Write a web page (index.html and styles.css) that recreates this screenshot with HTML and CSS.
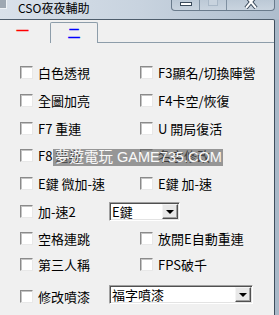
FILE: index.html
```html
<!DOCTYPE html>
<html>
<head>
    <meta charset="UTF-8">
    <meta name="viewport" content="width=device-width, initial-scale=1.0">
    <title>CSO夜夜輔助</title>
    <link rel="stylesheet" href="styles.css">
</head>
<body>
    <div class="window">
        <div class="titlebar">
            <span class="appIcon"></span>
            <span class="title">CSO夜夜輔助</span>
            <div class="captionBtns">
                <span class="cap capMin"><i></i></span>
                <span class="cap capMax"><i></i></span>
                <span class="cap capClose">
                    <svg width="14" height="9" viewBox="0 0 14 9">
                        <path d="M2,-4 L12,8 M12,-4 L2,8" stroke="#3a4a5a" stroke-width="4" fill="none"/>
                        <path d="M2,-4 L12,8 M12,-4 L2,8" stroke="#ffffff" stroke-width="2" fill="none"/>
                    </svg>
                </span>
            </div>
        </div>

        <div class="client">
            <div class="tabs">
                <span class="tab tabActive">一</span>
                <span class="tab tabOther">二</span>
                <span class="tabRest"></span>
            </div>

            <div class="options">
                <label class="opt"><span class="box"></span>白色透視</label>
                <label class="opt"><span class="box"></span>F3顯名/切換陣營</label>

                <label class="opt"><span class="box"></span>全圖加亮</label>
                <label class="opt"><span class="box"></span>F4卡空/恢復</label>

                <label class="opt"><span class="box"></span>F7 重連</label>
                <label class="opt"><span class="box"></span>U 開局復活</label>

                <label class="opt"><span class="box"></span>F8 遁身</label>
                <label class="opt"><span class="box"></span>名字修改</label>

                <label class="opt"><span class="box"></span>E鍵 微加-速</label>
                <label class="opt"><span class="box"></span>E鍵 加-速</label>

                <div class="opt wide">
                    <span class="box"></span>
                    <span class="optLabel">加-速2</span>
                    <div class="combo comboKey">
                        <span class="comboText">E鍵</span>
                        <span class="comboBtn"><i></i></span>
                    </div>
                </div>

                <label class="opt"><span class="box"></span>空格連跳</label>
                <label class="opt"><span class="box"></span>放開E自動重連</label>

                <label class="opt"><span class="box"></span>第三人稱</label>
                <label class="opt"><span class="box"></span>FPS破千</label>

                <div class="opt wide">
                    <span class="box"></span>
                    <span class="optLabel">修改噴漆</span>
                    <div class="combo comboSpray">
                        <span class="comboText">福字噴漆</span>
                        <span class="comboBtn"><i></i></span>
                    </div>
                </div>
            </div>
        </div>

        <div class="watermark">夢遊電玩 GAME735.COM</div>
    </div>
</body>
</html>
```

FILE: styles.css
```css
body {
    margin: 0;
    font-family: "Noto Sans CJK TC", sans-serif;
}

.window {
    position: relative;
    width: 279px;
    height: 315px;
    overflow: hidden;
    background-color: #a9b8c8;
    display: flex;
    flex-direction: column;
}

/* title bar */
.titlebar {
    height: 19px;
    flex: none;
    display: flex;
    align-items: flex-start;
    background: linear-gradient(to right, #d9e1ea, #c8d3df 50%, #aebdcd);
}

.appIcon {
    width: 6px;
    height: 8px;
    background-color: #9ea8b2;
    border-right: 1px solid #eef2f5;
    border-bottom: 1px solid #eef2f5;
}

.title {
    margin-left: 11px;
    font-size: 12px;
    line-height: 16px;
    color: #000;
}

.captionBtns {
    margin-left: auto;
    margin-right: 4px;
    display: flex;
    height: 11px;
    border: 1px solid #6a7b8c;
    border-top: none;
    border-radius: 0 0 4px 4px;
    box-sizing: border-box;
    overflow: hidden;
    background: linear-gradient(#bcc9d6, #c9d4df);
}

.cap {
    display: flex;
    justify-content: center;
    align-items: flex-start;
    height: 100%;
}

.capMin {
    width: 27px;
    border-right: 1px solid #7f90a1;
}

.capMin i {
    margin-top: 2px;
    width: 10px;
    height: 2px;
    border: 1px solid #3a4a5a;
    background-color: #fff;
}

.capMax {
    width: 26px;
    border-right: 1px solid #7f90a1;
}

.capMax i {
    width: 8px;
    height: 5px;
    border: 1px solid #a9b8c7;
    border-top: none;
    background-color: #c8d3de;
}

.capClose {
    width: 47px;
}

/* client area */
.client {
    flex: 1;
    margin-right: 4px;
    background-color: #f0f0f0;
    border-top: 1px solid #4e5d6c;
    border-right: 1px solid #3f4e5d;
    border-top-right-radius: 2px;
}

.tabs {
    display: flex;
    height: 23px;
}

.tab {
    font-size: 13px;
    line-height: 20px;
    text-align: center;
}

.tabActive {
    width: 45px;
    padding-right: 5px;
    color: #ff0000;
    -webkit-text-stroke: 0.3px #ff0000;
}

.tabOther {
    width: 46px;
    margin-top: 2px;
    color: #0000ff;
    -webkit-text-stroke: 0.3px #0000ff;
    border: 1px solid #8d9daa;
    border-bottom: none;
    border-radius: 2px 2px 0 0;
}

.tabRest {
    flex: 1;
    border-bottom: 1px solid #8d9daa;
}

.options {
    display: grid;
    grid-template-columns: 120px 1fr;
    grid-template-rows: 28px 28px 28px 27px 28px 28px 27px 24px 40px;
    padding-top: 15px;
    padding-left: 20px;
}

.opt {
    display: flex;
    align-items: center;
    gap: 5px;
    font-size: 13px;
    color: #000;
    white-space: nowrap;
}

.wide {
    grid-column: 1 / -1;
}

.optLabel {
    width: 66px;
}

.box {
    width: 13px;
    height: 13px;
    flex: none;
    box-sizing: border-box;
    border: 1px solid;
    border-color: #8a8a8a #e8e8e8 #e8e8e8 #8a8a8a;
    background-color: #fff;
    box-shadow: inset 1px 1px 0 #c4c4c4;
}

/* combo boxes */
.combo {
    display: flex;
    align-items: center;
    height: 19px;
    box-sizing: border-box;
    border: 1px solid;
    border-color: #a0a0a0 #ffffff #ffffff #a0a0a0;
    box-shadow: inset 1px 1px 0 #505050, inset -1px -1px 0 #e3e3e3;
    background-color: #fff;
    padding: 1px 1px 1px 2px;
}

.comboKey {
    width: 71px;
}

.comboSpray {
    width: 144px;
    margin-top: -3px;
}

.comboText {
    flex: 1;
    font-size: 13px;
    line-height: 15px;
}

.comboBtn {
    width: 16px;
    height: 15px;
    box-sizing: border-box;
    display: flex;
    justify-content: center;
    align-items: center;
    background-color: #e8e8e8;
    border: 1px solid;
    border-color: #f4f4f4 #505050 #505050 #f4f4f4;
    box-shadow: inset -1px -1px 0 #a0a0a0;
}

.comboBtn i {
    width: 0;
    height: 0;
    border-left: 4px solid transparent;
    border-right: 4px solid transparent;
    border-top: 4px solid #000;
    margin-top: 1px;
}

/* watermark sits over the panel */
.watermark {
    position: absolute;
    left: 53px;
    top: 149px;
    width: 170px;
    height: 17px;
    overflow: hidden;
    white-space: nowrap;
    background-color: rgba(95, 95, 95, 0.62);
    color: #fafafa;
    font-family: "Liberation Sans", "Noto Sans CJK TC", sans-serif;
    font-size: 14.5px;
    line-height: 17px;
    padding-left: 2px;
    box-sizing: border-box;
}
```
